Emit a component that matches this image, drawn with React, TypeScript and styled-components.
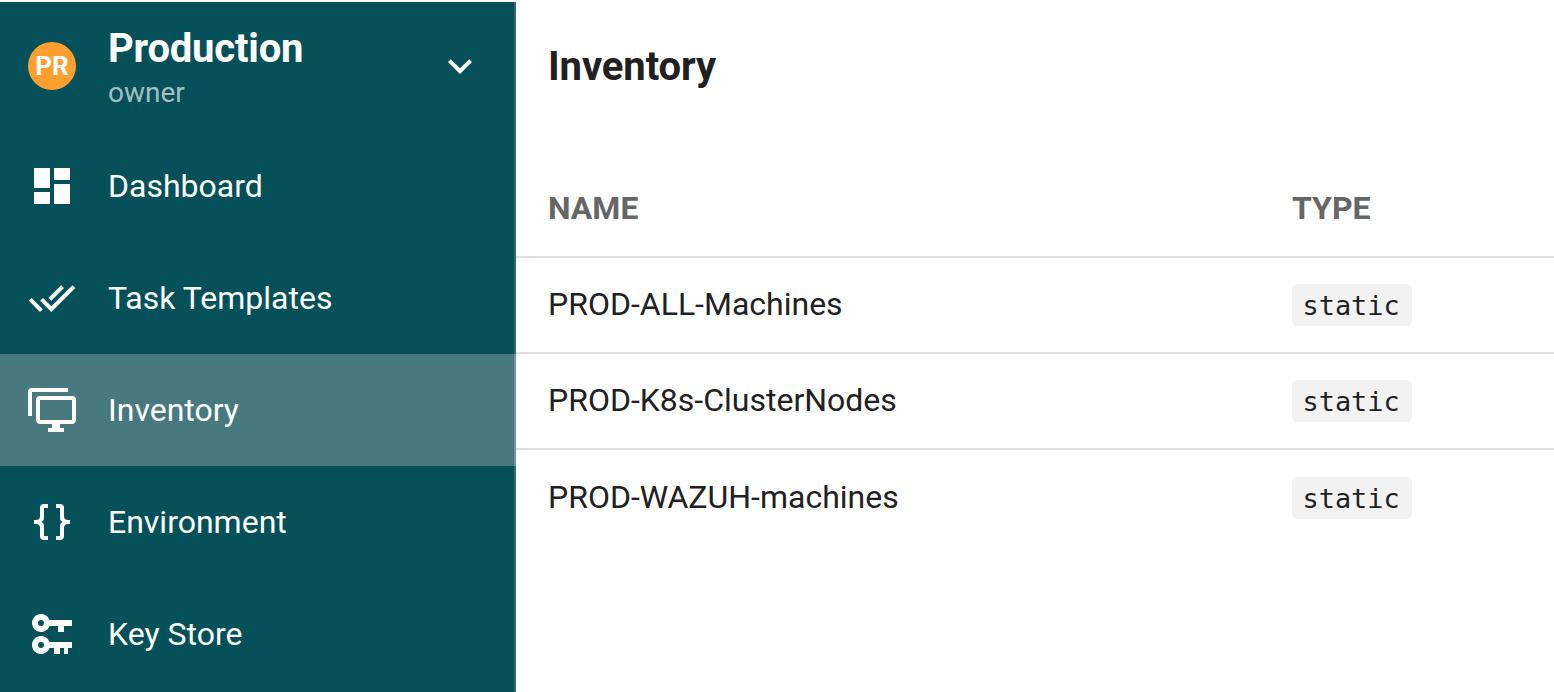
import React from "react";
import styled, { createGlobalStyle } from "styled-components";

const Global = createGlobalStyle`
  html, body { margin: 0; padding: 0; height: 100%; overflow: hidden; background: #fff; }
  #root { height: 100%; }
`;

const Page = styled.div`
  display: flex;
  width: 1554px;
  height: 692px;
  overflow: hidden;
  font-family: Roboto, "Liberation Sans", sans-serif;
  color: #212121;
`;

const Sidebar = styled.aside`
  flex: 0 0 516px;
  box-sizing: border-box;
  margin-top: 2px;
  background: #055059;
  border-right: 2px solid #33696f;
  color: #fff;
`;

const ProjectHeader = styled.div`
  display: flex;
  align-items: center;
  height: 128px;
  box-sizing: border-box;
  padding: 0 30px 0 28px;
`;

const Avatar = styled.div`
  flex: 0 0 48px;
  height: 48px;
  border-radius: 50%;
  background: #ff9f2f;
  display: flex;
  align-items: center;
  justify-content: center;
  font-size: 26px;
  font-weight: 700;
  margin-right: 32px;
`;

const ProjectInfo = styled.div`
  flex: 1;
  display: flex;
  flex-direction: column;
  gap: 4px;
  padding-top: 2px;
`;

const ProjectName = styled.div`
  font-size: 40px;
  line-height: 48px;
  font-weight: 700;
  letter-spacing: -0.2px;
`;

const ProjectRole = styled.div`
  font-size: 28px;
  line-height: 32px;
  color: rgba(255, 255, 255, 0.65);
`;

const NavRow = styled.div<{ $active?: boolean }>`
  display: flex;
  align-items: center;
  height: 112px;
  padding-left: 28px;
  background: ${(p) => (p.$active ? "#47797e" : "transparent")};
  box-shadow: ${(p) => (p.$active ? "2px 0 0 #6f9597" : "none")};
`;

const IconSlot = styled.svg`
  flex: 0 0 48px;
  width: 48px;
  height: 48px;
  fill: currentColor;
`;

const NavLabel = styled.span`
  margin-left: 32px;
  font-size: 32px;
  line-height: 40px;
`;

const Main = styled.main`
  flex: 1;
  min-width: 0;
  display: flex;
  flex-direction: column;
`;

const Title = styled.h1`
  margin: 0;
  height: 132px;
  box-sizing: border-box;
  padding: 41px 32px 0;
  font-size: 40px;
  line-height: 52px;
  font-weight: 700;
  letter-spacing: -0.1px;
  color: #212121;
`;

const Table = styled.div`
  display: flex;
  flex-direction: column;
`;

const HeadRow = styled.div`
  display: grid;
  grid-template-columns: 744px 1fr;
  height: 126px;
  box-sizing: border-box;
  padding: 28px 32px 0;
  align-items: center;
  border-bottom: 2px solid #e0e0e0;
  font-size: 32px;
  font-weight: 700;
  color: #666;
`;

const Row = styled.div`
  display: grid;
  grid-template-columns: 744px 1fr;
  height: 96px;
  box-sizing: border-box;
  padding: 0 32px;
  align-items: center;
  font-size: 32px;
  color: #212121;
  border-bottom: 2px solid #e0e0e0;
  &:last-child { border-bottom: none; }
`;

const RowName = styled.span`
  margin-top: -2px;
`;

const Code = styled.code`
  justify-self: start;
  background: #f2f2f2;
  border-radius: 6px;
  height: 42px;
  line-height: 43px;
  width: 120px;
  box-sizing: border-box;
  padding-left: 10.5px;
  font-family: "DejaVu Sans Mono", monospace;
  font-size: 26.9px;
  color: #212121;
`;

const icons = {
  dashboard: "M13,3V9H21V3M13,21H21V11H13M3,21H11V15H3M3,13H11V3H3V13Z",
  tasks: "M0.41,13.41L6,19L7.41,17.58L1.83,12M22.24,5.58L11.66,16.17L7.5,12L6.07,13.41L11.66,19L23.66,7M18,7L16.59,5.58L10.24,11.93L11.66,13.34L18,7Z",
  monitor: "M22,17V7H6V17H22M22,5A2,2 0 0,1 24,7V17C24,18.11 23.1,19 22,19H16V21H18V23H10V21H12V19H6C4.89,19 4,18.11 4,17V7A2,2 0 0,1 6,5H22M2,3V15H0V3A2,2 0 0,1 2,1H20V3H2Z",
  braces: "M8,3A2,2 0 0,0 6,5V9A2,2 0 0,1 4,11H3V13H4A2,2 0 0,1 6,15V19A2,2 0 0,0 8,21H10V19H8V14A2,2 0 0,0 6,12A2,2 0 0,0 8,10V5H10V3M16,3A2,2 0 0,1 18,5V9A2,2 0 0,0 20,11H21V13H20A2,2 0 0,0 18,15V19A2,2 0 0,1 16,21H14V19H16V14A2,2 0 0,1 18,12A2,2 0 0,1 16,10V5H14V3H16Z",
  keys: "M6.5,2C8.46,2 10.13,3.25 10.74,5H22V8H18V11H15V8H10.74C10.13,9.75 8.46,11 6.5,11C4,11 2,9 2,6.5C2,4 4,2 6.5,2M6.5,5A1.5,1.5 0 0,0 5,6.5A1.5,1.5 0 0,0 6.5,8A1.5,1.5 0 0,0 8,6.5A1.5,1.5 0 0,0 6.5,5M6.5,13C8.46,13 10.13,14.25 10.74,16H22V19H20V22H18V19H16V22H13V19H10.74C10.13,20.75 8.46,22 6.5,22C4,22 2,20 2,17.5C2,15 4,13 6.5,13M6.5,16A1.5,1.5 0 0,0 5,17.5A1.5,1.5 0 0,0 6.5,19A1.5,1.5 0 0,0 8,17.5A1.5,1.5 0 0,0 6.5,16Z",
  chevron: "M7.41,8.58L12,13.17L16.59,8.58L18,10L12,16L6,10L7.41,8.58Z",
};

const Icon = ({ d }: { d: string }) => (
  <IconSlot viewBox="0 0 24 24">
    <path d={d} />
  </IconSlot>
);

const nav = [
  { label: "Dashboard", d: icons.dashboard },
  { label: "Task Templates", d: icons.tasks },
  { label: "Inventory", d: icons.monitor, active: true },
  { label: "Environment", d: icons.braces },
  { label: "Key Store", d: icons.keys },
];

const rows = ["PROD-ALL-Machines", "PROD-K8s-ClusterNodes", "PROD-WAZUH-machines"];

export default function App() {
  return (
    <Page>
      <Global />
      <Sidebar>
        <ProjectHeader>
          <Avatar>PR</Avatar>
          <ProjectInfo>
            <ProjectName>Production</ProjectName>
            <ProjectRole>owner</ProjectRole>
          </ProjectInfo>
          <Icon d={icons.chevron} />
        </ProjectHeader>
        {nav.map((n) => (
          <NavRow key={n.label} $active={n.active}>
            <Icon d={n.d} />
            <NavLabel>{n.label}</NavLabel>
          </NavRow>
        ))}
      </Sidebar>
      <Main>
        <Title>Inventory</Title>
        <Table>
          <HeadRow>
            <span>NAME</span>
            <span>TYPE</span>
          </HeadRow>
          {rows.map((r) => (
            <Row key={r}>
              <RowName>{r}</RowName>
              <Code>static</Code>
            </Row>
          ))}
        </Table>
      </Main>
    </Page>
  );
}
